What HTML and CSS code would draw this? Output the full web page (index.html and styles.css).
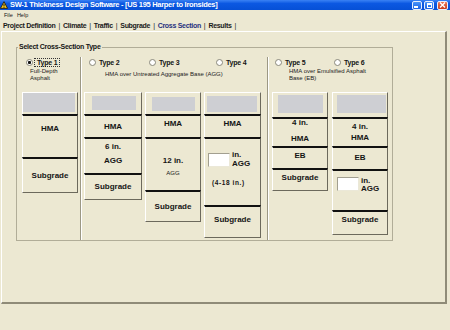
FILE: index.html
```html
<!DOCTYPE html>
<html lang="en">
<head>
    <meta charset="UTF-8">
    <title>SW-1 Thickness Design Software</title>
    <link rel="stylesheet" href="styles.css">
</head>
<body>

<div class="titlebar">
    <svg class="app-icon" width="8" height="8" viewBox="0 0 8 8">
        <path d="M4 0.6 L7.6 7.4 L0.4 7.4 Z" fill="#f2c418" stroke="#1e1e1e" stroke-width="0.9"/>
        <rect x="3.5" y="2.8" width="1" height="2.5" fill="#1e1e1e"/>
        <rect x="3.5" y="5.9" width="1" height="0.9" fill="#1e1e1e"/>
    </svg>
    <span class="title">SW-1 Thickness Design Software - [US 195 Harper to Ironsides]</span>
    <div class="win-buttons">
        <span class="win-btn"><span class="min-bar"></span></span>
        <span class="win-btn"><span class="max-box"></span></span>
        <span class="win-btn close">
            <svg width="7" height="6" viewBox="0 0 7 6"><path d="M1 0.5 L6 5.5 M6 0.5 L1 5.5" stroke="#fff" stroke-width="1.4"/></svg>
        </span>
    </div>
</div>

<div class="menubar">
    <span>File</span>
    <span>Help</span>
</div>

<div class="tabs">
    <span>Project Definition</span><span class="bar">|</span>
    <span>Climate</span><span class="bar">|</span>
    <span>Traffic</span><span class="bar">|</span>
    <span>Subgrade</span><span class="bar">|</span>
    <span class="current">Cross Section</span><span class="bar">|</span>
    <span>Results</span><span class="bar">|</span>
</div>

<div class="panel">
    <fieldset class="group">
        <legend>Select Cross-Section Type</legend>
        <div class="sections">

            <!-- Type 1 -->
            <div class="sec sec-full">
                <div class="head">
                    <div class="radios">
                        <label class="radio"><span class="dot on"></span><span class="focus">Type 1</span></label>
                    </div>
                    <p class="desc">Full-Depth<br>Asphalt</p>
                </div>
                <div class="cols">
                    <div class="col c1">
                        <div class="cell top"><div class="swatch"></div></div>
                        <div class="cell hma">HMA</div>
                        <div class="cell sub">Subgrade</div>
                    </div>
                </div>
            </div>

            <div class="vsep"></div>

            <!-- Types 2 to 4 -->
            <div class="sec sec-agg">
                <div class="head">
                    <div class="radios">
                        <label class="radio w60"><span class="dot"></span>Type 2</label>
                        <label class="radio w67"><span class="dot"></span>Type 3</label>
                        <label class="radio"><span class="dot"></span>Type 4</label>
                    </div>
                    <p class="desc">HMA over Untreated Aggregate Base (AGG)</p>
                </div>
                <div class="cols">
                    <div class="col c2">
                        <div class="cell top"><div class="swatch"></div></div>
                        <div class="cell hma">HMA</div>
                        <div class="cell agg"><span class="ln14">6 in.</span><span class="ln14">AGG</span></div>
                        <div class="cell sub">Subgrade</div>
                    </div>
                    <div class="col c3">
                        <div class="cell top"><div class="swatch"></div></div>
                        <div class="cell hma">HMA</div>
                        <div class="cell agg"><span class="ln12">12 in.</span><span class="ln12 small">AGG</span></div>
                        <div class="cell sub">Subgrade</div>
                    </div>
                    <div class="col c4">
                        <div class="cell top"><div class="swatch"></div></div>
                        <div class="cell hma">HMA</div>
                        <div class="cell agg">
                            <div class="depth-row">
                                <input class="depth" type="text">
                                <span class="unit">in.<br>AGG</span>
                            </div>
                            <span class="range">(4-18 in.)</span>
                        </div>
                        <div class="cell sub">Subgrade</div>
                    </div>
                </div>
            </div>

            <div class="vsep"></div>

            <!-- Types 5 and 6 -->
            <div class="sec sec-eb">
                <div class="head">
                    <div class="radios">
                        <label class="radio w59"><span class="dot"></span>Type 5</label>
                        <label class="radio"><span class="dot"></span>Type 6</label>
                    </div>
                    <p class="desc">HMA over Emulsified Asphalt<br>Base (EB)</p>
                </div>
                <div class="cols">
                    <div class="col c5">
                        <div class="cell top"><div class="swatch"></div></div>
                        <div class="cell hma"><span class="ln8">4 in.</span><span class="ln8 gap8">HMA</span></div>
                        <div class="cell eb">EB</div>
                        <div class="cell sub">Subgrade</div>
                    </div>
                    <div class="col c6">
                        <div class="cell top"><div class="swatch"></div></div>
                        <div class="cell hma"><span class="ln10">4 in.</span><span class="ln10">HMA</span></div>
                        <div class="cell eb">EB</div>
                        <div class="cell agg">
                            <div class="depth-row">
                                <input class="depth" type="text">
                                <span class="unit">in.<br>AGG</span>
                            </div>
                        </div>
                        <div class="cell sub">Subgrade</div>
                    </div>
                </div>
            </div>

        </div>
    </fieldset>
</div>

</body>
</html>
```

FILE: styles.css
```css
* {
    margin: 0;
    padding: 0;
    box-sizing: border-box;
}

body {
    width: 450px;
    height: 330px;
    overflow: hidden;
    background: #ece8d2;
    color: #151515;
    font-family: "Liberation Sans", Arial, sans-serif;
}

/* window title */
.titlebar {
    height: 10px;
    display: flex;
    align-items: center;
    background: linear-gradient(#3a82f4, #0b58e2 35%, #0650d6);
    color: #fff;
}

.app-icon {
    flex: none;
    margin: 0 2px 0 0;
}

.title {
    flex: 1;
    font-size: 7.5px;
    font-weight: bold;
    letter-spacing: -0.3px;
    line-height: 10px;
    white-space: nowrap;
}

.win-buttons {
    display: flex;
    gap: 2px;
    margin-right: 2px;
}

.win-btn {
    width: 10px;
    height: 9px;
    border: 1px solid #e8eefc;
    border-radius: 2px;
    background: linear-gradient(#4a94f8, #1c62e4);
    display: flex;
    align-items: center;
    justify-content: center;
}

.win-btn.close {
    width: 11px;
    margin-left: 1px;
    background: linear-gradient(#ea7654, #c83c1c);
}

.min-bar {
    width: 4px;
    height: 2px;
    background: #fff;
    margin: 4px 2px 0 0;
}

.max-box {
    width: 5px;
    height: 5px;
    border: 1px solid #fff;
    border-top-width: 2px;
}

/* menu and tabs */
.menubar {
    height: 10px;
    display: flex;
    gap: 4px;
    padding-left: 4px;
    font-size: 5.5px;
    line-height: 10px;
}

.tabs {
    height: 11px;
    display: flex;
    align-items: center;
    gap: 3px;
    padding-left: 3px;
    font-size: 7px;
    font-weight: bold;
    letter-spacing: -0.3px;
    color: #1a1a1a;
}

.tabs .current {
    color: #27307e;
}

.tabs .bar {
    font-weight: normal;
}

/* tab page */
.panel {
    width: 446px;
    height: 273px;
    margin-left: 1px;
    border-top: 1px solid #fff;
    border-left: 1px solid #fff;
    border-right: 2px solid #8f8b78;
    border-bottom: 2px solid #8f8b78;
}

.group {
    width: 377px;
    margin: 11px 0 0 14px;
    border: 1px solid #b1ad98;
}

.group legend {
    margin-left: 1px;
    padding: 0 1px;
    font-size: 7px;
    font-weight: bold;
    letter-spacing: -0.25px;
    line-height: 8px;
}

.sections {
    display: flex;
    height: 189px;
}

.vsep {
    width: 2px;
    margin-top: 6px;
    border-left: 1px solid #9c9884;
    border-right: 1px solid #fff;
}

.sec-full { width: 63px; }
.sec-agg { width: 185px; }
.sec-eb { width: 123px; }

.head {
    height: 41px;
    padding-top: 7px;
}

.radios {
    display: flex;
    align-items: center;
    height: 8px;
    font-size: 7px;
    font-weight: bold;
    letter-spacing: -0.2px;
}

.sec-full .radios { padding-left: 9px; }
.sec-agg .radios { padding-left: 7px; }
.sec-eb .radios { padding-left: 6px; }

.radio {
    display: flex;
    align-items: center;
    gap: 3px;
}

.radio.w60 { width: 60px; }
.radio.w67 { width: 67px; }
.radio.w59 { width: 59px; }

.dot {
    width: 7px;
    height: 7px;
    border-radius: 50%;
    border: 1px solid #8a887c;
    background: #fff;
}

.dot.on {
    background: radial-gradient(circle, #111 1.3px, #fff 1.8px);
}

.focus {
    margin-left: -2px;
    padding: 0 2px;
    line-height: 7px;
    border: 1px dotted #333;
}

.desc {
    font-size: 6px;
    line-height: 7px;
    color: #222;
}

.sec-full .desc { padding-left: 13px; margin-top: 2px; }
.sec-agg .desc { padding-left: 23px; margin-top: 5px; }
.sec-eb .desc { padding-left: 20px; margin-top: 2px; }

/* layer columns */
.cols {
    display: flex;
    align-items: flex-start;
}

.sec-full .cols { padding-left: 5px; }
.sec-agg .cols { padding-left: 2px; gap: 3px; }
.sec-eb .cols { padding-left: 3px; gap: 4px; }

.col {
    width: 56px;
    display: flex;
    flex-direction: column;
}

.col.c2 { width: 58px; }
.col.c4 { width: 57px; }

.cell {
    display: flex;
    flex-direction: column;
    align-items: center;
    justify-content: center;
    border-left: 1px solid #fff;
    border-right: 1px solid #6c695c;
    font-size: 8px;
    font-weight: bold;
    line-height: 8px;
}

.cell:first-child {
    border-top: 1px solid #fff;
}

.cell + .cell {
    border-top: 2px solid #111;
}

.cell:last-child {
    border-bottom: 1px solid #6c695c;
}

.cell.top {
    align-items: stretch;
}

.swatch {
    flex: 1;
    background: #cecfd3;
}

.ln8 { line-height: 8px; }
.ln10 { line-height: 10.5px; }
.ln12 { line-height: 12px; }
.ln14 { line-height: 14px; }
.gap8 { margin-top: 8px; }

.small {
    font-size: 6px;
    font-weight: normal;
}

.depth-row {
    display: flex;
    align-items: flex-start;
    gap: 2px;
}

.depth {
    width: 22px;
    height: 14px;
    background: #fff;
    border: 1px solid;
    border-color: #a29f90 #ebe8d8 #ebe8d8 #a29f90;
    outline: none;
}

.unit {
    line-height: 9px;
}

.range {
    margin: 11px 0 0 4px;
    font-size: 6.5px;
    letter-spacing: 0.6px;
    line-height: 8px;
}

/* column sizes */
.c1 .top { height: 22px; }
.c1 .hma { height: 43px; justify-content: flex-start; padding-top: 9px; }
.c1 .sub { height: 36px; }
.c1 .swatch { margin: 0 2px 2px 0; }

.c2 .top { height: 22px; }
.c2 .hma { height: 23px; }
.c2 .agg { height: 36px; justify-content: flex-start; padding-top: 1px; }
.c2 .sub { height: 27px; }
.c2 .swatch { margin: 3px 5px 4px 7px; }

.c3 .top { height: 22px; }
.c3 .hma { height: 23px; padding-bottom: 5px; }
.c3 .agg { height: 53px; justify-content: flex-start; padding-top: 16px; }
.c3 .sub { height: 32px; }
.c3 .swatch { margin: 4px 5px 3px 6px; }

.c4 .top { height: 22px; }
.c4 .hma { height: 23px; padding-bottom: 5px; }
.c4 .agg { height: 68px; align-items: flex-start; justify-content: flex-start; padding: 11px 0 0 3px; }
.c4 .depth { margin-top: 3px; }
.c4 .sub { height: 33px; padding-bottom: 4px; }
.c4 .swatch { margin: 3px 3px 2px 2px; }

.c5 .top { height: 25px; }
.c5 .hma { height: 29px; justify-content: flex-start; }
.c5 .eb { height: 22px; padding-bottom: 5px; }
.c5 .sub { height: 23px; padding-bottom: 5px; }
.c5 .swatch { margin: 2px 4px 4px 5px; }

.c6 .top { height: 25px; }
.c6 .hma { height: 29px; }
.c6 .eb { height: 23px; padding-bottom: 2px; }
.c6 .agg { height: 41px; align-items: flex-start; justify-content: flex-start; padding: 6px 0 0 4px; }
.c6 .unit { line-height: 8px; }
.c6 .sub { height: 25px; padding-bottom: 6px; }
.c6 .swatch { margin: 2px 1px 4px 4px; }
```
